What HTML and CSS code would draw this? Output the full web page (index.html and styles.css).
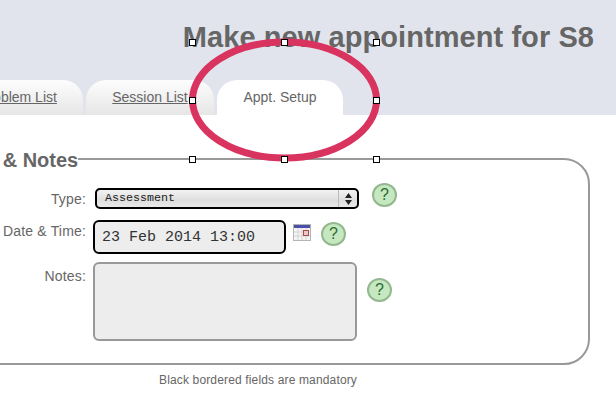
FILE: index.html
```html
<!DOCTYPE html>
<html lang="en">

<head>
    <meta charset="UTF-8">
    <meta name="viewport" content="width=device-width, initial-scale=1.0">
    <title>Make new appointment</title>
    <link rel="stylesheet" href="styles.css">
</head>

<body>

    <div class="page">

        <header class="top">
            <h1>Make new appointment for S8</h1>
            <nav class="tabs">
                <a class="tab tab-first" href="#">Problem List</a>
                <a class="tab tab-second" href="#">Session List</a>
                <span class="tab active">Appt. Setup</span>
            </nav>
        </header>

        <form class="content">
            <fieldset class="box">
                <legend>Appt. &amp; Notes</legend>

                <div class="row row-type">
                    <label>Type:</label>
                    <div class="fake-select">
                        <span class="fake-value">Assessment</span>
                        <span class="fake-arrows">
                            <svg width="7" height="12" viewBox="0 0 7 12">
                                <path d="M3.5 0 L7 5 L0 5 Z M0 7 L7 7 L3.5 12 Z" fill="#222" />
                            </svg>
                        </span>
                    </div>
                    <span class="help help-type">?</span>
                </div>

                <div class="row row-date">
                    <label for="date">Date &amp; Time:</label>
                    <input id="date" class="date" type="text" value="23 Feb 2014 13:00">
                    <svg class="cal" width="18" height="17" viewBox="0 0 18 17">
                        <rect x="0.5" y="0.5" width="17" height="16" fill="#f4f4f4" stroke="#b5b5b5" />
                        <rect x="1" y="1" width="16" height="3" fill="#4a4fa8" />
                        <path d="M1 8 H17 M1 12 H17 M5 4 V16 M9 4 V16 M13 4 V16" stroke="#d4d4d4" />
                        <rect x="10.5" y="6.5" width="5" height="5" fill="#e8c8c8" stroke="#b0484c" />
                    </svg>
                    <span class="help help-date">?</span>
                </div>

                <div class="row row-notes">
                    <label for="notes">Notes:</label>
                    <textarea id="notes" class="notes"></textarea>
                    <span class="help help-notes">?</span>
                </div>
            </fieldset>

            <p class="mandatory">Black bordered fields are mandatory</p>
        </form>

        <!-- annotation drawn on top of the screenshot -->
        <svg class="markup" width="616" height="418" viewBox="0 0 616 418">
            <ellipse cx="284.5" cy="100" rx="92" ry="58" fill="none" stroke="#d9335f" stroke-width="7" />
            <g fill="#fff" stroke="#000">
                <rect x="189.5" y="39.5" width="6" height="6" />
                <rect x="281.5" y="39.5" width="6" height="6" />
                <rect x="373.5" y="39.5" width="6" height="6" />
                <rect x="189.5" y="97.5" width="6" height="6" />
                <rect x="373.5" y="97.5" width="6" height="6" />
                <rect x="189.5" y="156.5" width="6" height="6" />
                <rect x="281.5" y="156.5" width="6" height="6" />
                <rect x="373.5" y="156.5" width="6" height="6" />
            </g>
        </svg>

    </div>

</body>

</html>
```

FILE: styles.css
```css
* {
    box-sizing: border-box;
}

body {
    margin: 0;
    background: white;
    font-family: "Liberation Sans", Arial, sans-serif;
    color: #666;
}

.page {
    position: relative;
    width: 616px;
    height: 418px;
    overflow: hidden;
}

.top {
    height: 115px;
    background: #e1e4ec;
    display: flex;
    flex-direction: column;
    justify-content: space-between;
}

h1 {
    margin: 0;
    padding: 21px 22px 0 0;
    font-size: 29px;
    line-height: 32px;
    letter-spacing: 0.07px;
    font-weight: bold;
    text-align: right;
    color: #666;
}

.tabs {
    display: flex;
    gap: 3px;
    margin-left: -43px;
}

.tab {
    width: 126px;
    height: 35px;
    border-radius: 20px 20px 0 0;
    background: linear-gradient(#fdfdfd, #e6e6e6);
    color: #666;
    font-size: 14px;
    line-height: 35px;
    text-align: center;
}

.tab-first {
    padding-right: 4px;
}

.tab-second {
    width: 128px;
}

.active {
    background: white;
}

.content {
    padding-top: 32px;
}

.box {
    margin: 0 26px 0 -60px;
    min-width: 0;
    height: 218px;
    padding: 0;
    border: 2px solid #999;
    border-radius: 26px;
}

legend {
    margin-left: 4px;
    padding: 2px 0 0;
    font-size: 20px;
    line-height: 22px;
    font-weight: bold;
    white-space: nowrap;
}

.row {
    display: flex;
    align-items: flex-start;
}

.row label {
    width: 144px;
    flex: none;
    font-size: 14px;
    line-height: 16px;
    letter-spacing: 0.17px;
    text-align: right;
}

.row-type {
    height: 32px;
    margin-top: 17px;
}

.row-type label {
    padding-top: 3px;
}

.row-date {
    height: 42px;
}

.row-date label {
    padding-top: 3px;
}

.row-notes label {
    padding-top: 6px;
}

.fake-select {
    width: 264px;
    height: 21px;
    margin-left: 9px;
    display: flex;
    justify-content: space-between;
    border: 2px solid black;
    border-radius: 5px;
    background: linear-gradient(#f2f2f2, #dedede 60%, #e8e8e8);
    font-family: "Liberation Mono", "Courier New", monospace;
    font-size: 11.67px;
    color: #222;
}

.fake-value {
    padding: 0 0 0 8px;
    line-height: 17px;
}

.fake-arrows {
    width: 19px;
    display: flex;
    align-items: center;
    justify-content: center;
    border-left: 1px solid #bbb;
}

.date {
    width: 193px;
    height: 34px;
    margin-left: 7px;
    padding: 0 0 0 7px;
    border: 2px solid black;
    border-radius: 6px;
    background: #ededed;
    font-family: "Liberation Mono", "Courier New", monospace;
    font-size: 15px;
    color: #333;
    outline: none;
}

.cal {
    margin: 4px 0 0 7px;
}

.notes {
    width: 264px;
    height: 79px;
    margin-left: 7px;
    border: 2px solid #999;
    border-radius: 6px;
    background: #ededed;
    outline: none;
    resize: none;
}

.help {
    width: 25px;
    height: 24px;
    flex: none;
    border: 2px solid #93b78e;
    border-radius: 50%;
    background: #c6e8c0;
    color: #2c6b33;
    font-size: 16px;
    line-height: 20px;
    text-align: center;
}

.help-type {
    margin: -5px 0 0 13px;
}

.help-date {
    margin: 2px 0 0 10px;
}

.help-notes {
    margin: 16px 0 0 10px;
}

.mandatory {
    margin: 8px 0 0 159px;
    font-size: 12px;
    line-height: 14px;
    letter-spacing: 0.15px;
}

.markup {
    position: absolute;
    left: 0;
    top: 0;
}
```
